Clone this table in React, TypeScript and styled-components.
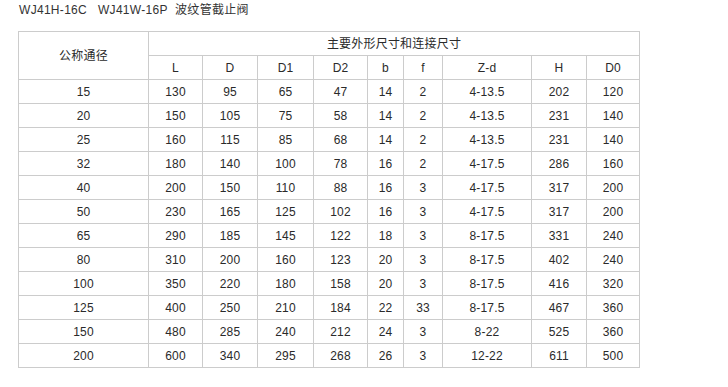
import React from "react";
import styled, { createGlobalStyle } from "styled-components";

const GlobalStyle = createGlobalStyle`
  html, body {
    margin: 0;
    padding: 0;
    background: #ffffff;
  }
  body {
    font-family: "Liberation Sans", Arial, "Noto Sans CJK SC", sans-serif;
    font-size: 12px;
    color: #333333;
  }
`;

const Page = styled.div`
  width: 728px;
  height: 387px;
  padding: 0 0 0 18px;
  box-sizing: border-box;
  display: flex;
  flex-direction: column;
`;

const Title = styled.div`
  height: 31px;
  padding: 2px 0 0 1px;
  box-sizing: border-box;
  line-height: 16px;
  font-size: 12px;
  color: #333333;
  letter-spacing: 0.3px;
`;

const Table = styled.table`
  border-collapse: collapse;
  table-layout: fixed;
  width: 622px;
`;

const Cell = styled.td`
  border: 1px solid #cccccc;
  height: 23px;
  padding: 0;
  text-align: center;
  vertical-align: middle;
  line-height: 14px;
  color: #2a2a2a;
  font-size: 12px;
  letter-spacing: 0.2px;
`;

const widths = [130, 54, 55, 56, 54, 36, 39, 89, 55, 53];
const heads = ["L", "D", "D1", "D2", "b", "f", "Z-d", "H", "D0"];

const rows: (string | number)[][] = [
  [15, 130, 95, 65, 47, 14, 2, "4-13.5", 202, 120],
  [20, 150, 105, 75, 58, 14, 2, "4-13.5", 231, 140],
  [25, 160, 115, 85, 68, 14, 2, "4-13.5", 231, 140],
  [32, 180, 140, 100, 78, 16, 2, "4-17.5", 286, 160],
  [40, 200, 150, 110, 88, 16, 3, "4-17.5", 317, 200],
  [50, 230, 165, 125, 102, 16, 3, "4-17.5", 317, 200],
  [65, 290, 185, 145, 122, 18, 3, "8-17.5", 331, 240],
  [80, 310, 200, 160, 123, 20, 3, "8-17.5", 402, 240],
  [100, 350, 220, 180, 158, 20, 3, "8-17.5", 416, 320],
  [125, 400, 250, 210, 184, 22, 33, "8-17.5", 467, 360],
  [150, 480, 285, 240, 212, 24, 3, "8-22", 525, 360],
  [200, 600, 340, 295, 268, 26, 3, "12-22", 611, 500],
];

export default function App() {
  return (
    <>
      <GlobalStyle />
      <Page>
        <Title>WJ41H-16C&nbsp;&nbsp; WJ41W-16P&nbsp; 波纹管截止阀</Title>
        <Table>
          <colgroup>
            {widths.map((w, i) => (
              <col key={i} style={{ width: w }} />
            ))}
          </colgroup>
          <tbody>
            <tr>
              <Cell rowSpan={2}>公称通径</Cell>
              <Cell colSpan={9}>主要外形尺寸和连接尺寸</Cell>
            </tr>
            <tr>
              {heads.map((h) => (
                <Cell key={h}>{h}</Cell>
              ))}
            </tr>
            {rows.map((r, i) => (
              <tr key={i}>
                {r.map((v, j) => (
                  <Cell key={j}>{v}</Cell>
                ))}
              </tr>
            ))}
          </tbody>
        </Table>
      </Page>
    </>
  );
}
